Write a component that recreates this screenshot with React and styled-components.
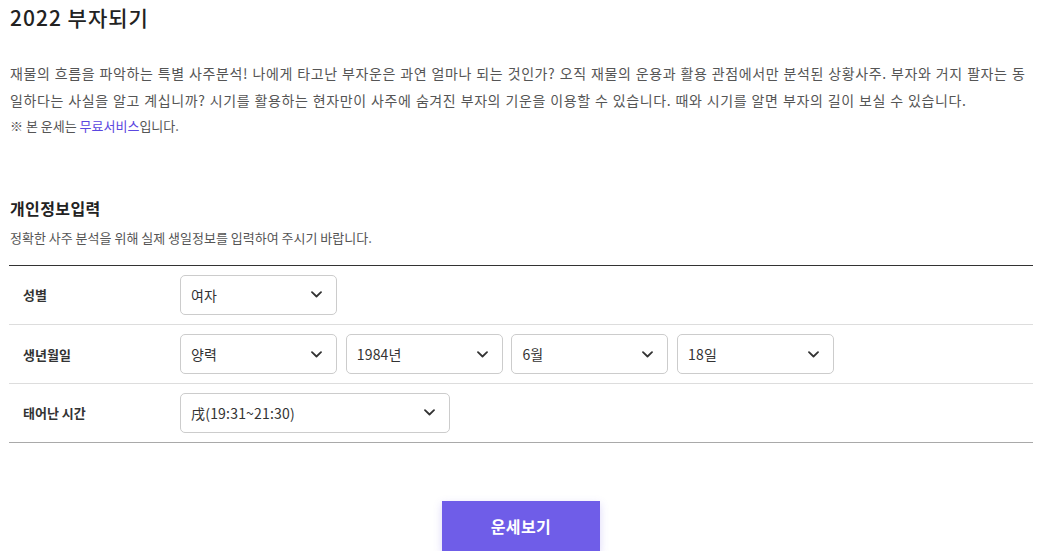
import React from "react"
import styled, { createGlobalStyle } from "styled-components"

const GlobalStyle = createGlobalStyle`
  html, body {
    margin: 0;
    padding: 0;
    background: #fff;
  }
  body {
    font-family: "Noto Sans CJK KR", "Noto Sans", sans-serif;
    color: #333;
  }
`

const Page = styled.div`
  padding: 0 6px 0 9px;
  width: 1039px;
  box-sizing: border-box;
`

const Title = styled.h1`
  margin: 0;
  padding: 2px 0 0 1px;
  font-size: 21px;
  font-weight: 500;
  line-height: 30px;
  color: #222;
  letter-spacing: 1px;
`

const Intro = styled.div`
  margin-top: 28px;
  padding-left: 1px;
  font-size: 14px;
  line-height: 26.5px;
  color: #555;
  letter-spacing: 0.6px;
  word-spacing: 0.6px;
`

const Notice = styled.p`
  margin: 0;
  font-size: 13px;
  color: #555;
  letter-spacing: 0;
  word-spacing: 0;

  a {
    color: #5b47e0;
    text-decoration: none;
  }
`

const SectionHead = styled.div`
  margin-top: 56px;
  padding-left: 1px;
`

const SectionTitle = styled.h2`
  margin: 0;
  font-size: 16px;
  font-weight: 700;
  line-height: 24px;
  color: #222;
  letter-spacing: 0.4px;
`

const SectionDesc = styled.p`
  margin: 8px 0 0;
  font-size: 13px;
  line-height: 20px;
  color: #555;
`

const Form = styled.div`
  margin-top: 17px;
  border-top: 1px solid #333;
  border-bottom: 1px solid #a9a9a9;
`

const Row = styled.div`
  display: flex;
  align-items: center;
  height: 58.7px;
  box-sizing: border-box;
  & + & {
    border-top: 1px solid #ddd;
  }
`

const Label = styled.div`
  width: 171px;
  padding-left: 14px;
  box-sizing: border-box;
  font-size: 13px;
  font-weight: 700;
  color: #333;
`

const Fields = styled.div`
  display: flex;
  gap: 8.7px;
`

const SelectBox = styled.div`
  width: ${p => p.$w || 157}px;
  height: 40px;
  box-sizing: border-box;
  border: 1px solid #ccc;
  border-radius: 5px;
  display: flex;
  align-items: center;
  justify-content: space-between;
  padding: 0 14px 0 10px;
  font-size: 14px;
  color: #333;
  background: #fff;
  letter-spacing: 0.2px;
`

const Chevron = () => (
  <svg width="11" height="7" viewBox="0 0 11 7" fill="none">
    <path d="M1 1.2 L5.5 5.5 L10 1.2" stroke="#333" strokeWidth="1.8" strokeLinecap="round" strokeLinejoin="round" />
  </svg>
)

const Select = ({ value, width }) => (
  <SelectBox $w={width}>
    <span>{value}</span>
    <Chevron />
  </SelectBox>
)

const ButtonWrap = styled.div`
  display: flex;
  justify-content: center;
  padding: 58px 0 0;
`

const Button = styled.button`
  width: 158px;
  height: 50px;
  border: none;
  background: #6f5de8;
  color: #fff;
  font-family: inherit;
  font-size: 16px;
  font-weight: 700;
  letter-spacing: 0.4px;
  box-shadow: 0 3px 8px rgba(111, 93, 232, 0.25);
  cursor: pointer;
`

const App = () => (
  <Page>
    <GlobalStyle />
    <Title>2022 부자되기</Title>
    <Intro>
      재물의 흐름을 파악하는 특별 사주분석! 나에게 타고난 부자운은 과연 얼마나 되는 것인가? 오직 재물의 운용과 활용 관점에서만 분석된 상황사주. 부자와 거지 팔자는 동일하다는 사실을 알고 계십니까? 시기를 활용하는 현자만이 사주에 숨겨진 부자의 기운을 이용할 수 있습니다. 때와 시기를 알면 부자의 길이 보실 수 있습니다.
      <Notice>※ 본 운세는 <a href="#">무료서비스</a>입니다.</Notice>
    </Intro>

    <SectionHead>
      <SectionTitle>개인정보입력</SectionTitle>
      <SectionDesc>정확한 사주 분석을 위해 실제 생일정보를 입력하여 주시기 바랍니다.</SectionDesc>
    </SectionHead>

    <Form>
      <Row>
        <Label>성별</Label>
        <Fields>
          <Select value="여자" />
        </Fields>
      </Row>
      <Row>
        <Label>생년월일</Label>
        <Fields>
          <Select value="양력" />
          <Select value="1984년" />
          <Select value="6월" />
          <Select value="18일" />
        </Fields>
      </Row>
      <Row>
        <Label>태어난 시간</Label>
        <Fields>
          <Select value="戌(19:31~21:30)" width={270} />
        </Fields>
      </Row>
    </Form>

    <ButtonWrap>
      <Button>운세보기</Button>
    </ButtonWrap>
  </Page>
)

export default App
